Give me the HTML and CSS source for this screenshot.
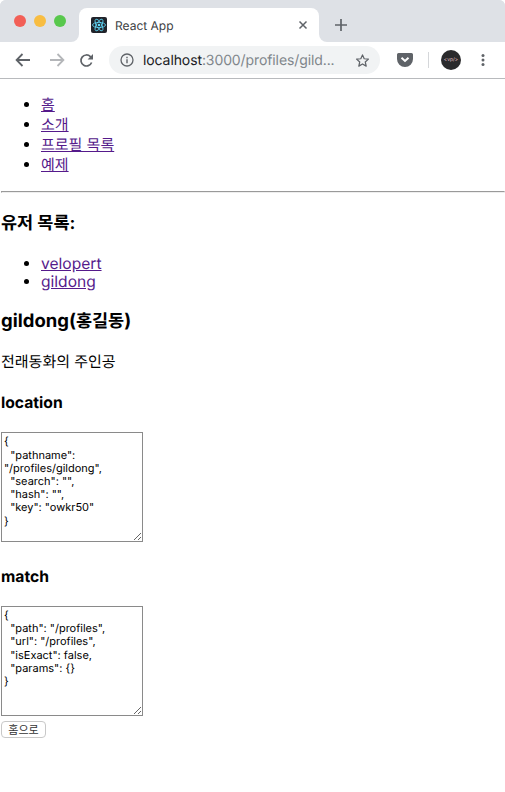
FILE: index.html
```html
<!DOCTYPE html>
<html lang="ko">
<head>
    <meta charset="UTF-8">
    <meta name="viewport" content="width=device-width, initial-scale=1.0">
    <title>React App</title>
    <link rel="stylesheet" href="styles.css">
</head>
<body>
    <!-- Browser window top -->
    <div class="tabstrip">
        <div class="lights">
            <span class="light red"></span>
            <span class="light yellow"></span>
            <span class="light green"></span>
        </div>
        <div class="tab">
            <svg class="favicon" width="16" height="16" viewBox="0 0 16 16">
                <rect width="16" height="16" rx="2" fill="#20232a"/>
                <g fill="none" stroke="#61dafb" stroke-width="0.8">
                    <ellipse cx="8" cy="8" rx="6.5" ry="2.6"/>
                    <ellipse cx="8" cy="8" rx="6.5" ry="2.6" transform="rotate(60 8 8)"/>
                    <ellipse cx="8" cy="8" rx="6.5" ry="2.6" transform="rotate(120 8 8)"/>
                </g>
                <circle cx="8" cy="8" r="1.3" fill="#61dafb"/>
            </svg>
            <span class="tab-title">React App</span>
            <svg class="tab-close" width="10" height="10" viewBox="0 0 10 10">
                <path d="M1.5 1.5l7 7M8.5 1.5l-7 7" stroke="#5f6368" stroke-width="1.5" fill="none"/>
            </svg>
        </div>
        <div class="strip-rest">
            <svg width="14" height="14" viewBox="0 0 14 14">
                <path d="M7 1v12M1 7h12" stroke="#5f6368" stroke-width="1.7" fill="none"/>
            </svg>
        </div>
    </div>
    <div class="toolbar">
        <svg class="tool back" width="16" height="14" viewBox="0 0 16 14">
            <path d="M15 7H2M7.500 1L1.600 7l5.900 6" stroke="#5f6368" stroke-width="1.800" fill="none"/>
        </svg>
        <svg class="tool forward" width="16" height="14" viewBox="0 0 16 14">
            <path d="M1 7h13M8.500 1l5.900 6-5.900 6" stroke="#b4b6b9" stroke-width="1.800" fill="none"/>
        </svg>
        <svg class="tool reload" width="15" height="15" viewBox="0 0 15 15">
            <path d="M12.600 9.500A5.500 5.500 0 1 1 11.400 3.600L13 5.200" stroke="#5f6368" stroke-width="1.700" fill="none"/>
            <path d="M14 1v5.400H8.600z" fill="#5f6368"/>
        </svg>
        <div class="omnibox">
            <svg class="info" width="14" height="14" viewBox="0 0 14 14">
                <circle cx="7" cy="7" r="6" stroke="#5f6368" stroke-width="1.300" fill="none"/>
                <path d="M7 6.200v4M7 3.700v1.500" stroke="#5f6368" stroke-width="1.400" fill="none"/>
            </svg>
            <span class="url"><span class="host">localhost</span>:3000/profiles/gild...</span>
            <svg class="star" width="15" height="15" viewBox="0 0 24 24">
                <path d="M12 3l2.700 6.200 6.800.6-5.100 4.500 1.500 6.700-5.900-3.500L6.100 21l1.500-6.700-5.100-4.500 6.800-.6z" stroke="#5f6368" stroke-width="2" stroke-linejoin="round" fill="none"/>
            </svg>
        </div>
        <svg class="pocket" width="16" height="14" viewBox="0 0 16 14">
            <path d="M1.500 0h13A1.500 1.500 0 0 1 16 1.500V6A8 8 0 0 1 0 6V1.500A1.500 1.500 0 0 1 1.500 0z" fill="#5f6368"/>
            <path d="M4.500 4.800L8 8l3.500-3.200" stroke="#fff" stroke-width="2" fill="none"/>
        </svg>
        <span class="toolbar-sep"></span>
        <div class="avatar">&lt;vp/&gt;</div>
        <svg class="menu" width="4" height="14" viewBox="0 0 4 14">
            <circle cx="2" cy="2.500" r="1.500" fill="#5f6368"/>
            <circle cx="2" cy="7" r="1.500" fill="#5f6368"/>
            <circle cx="2" cy="11.500" r="1.500" fill="#5f6368"/>
        </svg>
    </div>

    <!-- Page -->
    <div class="page">
        <ul class="nav">
            <li><a href="#">홈</a></li>
            <li><a href="#">소개</a></li>
            <li><a href="#">프로필 목록</a></li>
            <li><a href="#">예제</a></li>
        </ul>
        <hr>
        <h3 class="users-title"><span class="ko">유저 목록:</span></h3>
        <ul class="users">
            <li><a href="#">velopert</a></li>
            <li><a href="#">gildong</a></li>
        </ul>
        <h3 class="name">gildong(<span class="ko">홍길동</span>)</h3>
        <p class="bio">전래동화의 주인공</p>
        <h4>location</h4>
        <textarea readonly>{
  "pathname": "/profiles/gildong",
  "search": "",
  "hash": "",
  "key": "owkr50"
}</textarea>
        <h4 class="after-dump">match</h4>
        <textarea readonly>{
  "path": "/profiles",
  "url": "/profiles",
  "isExact": false,
  "params": {}
}</textarea>
        <button type="button">홈으로</button>
    </div>
</body>
</html>
```

FILE: styles.css
```css
html, body {
    margin: 0;
    padding: 0;
    background-color: #fff;
}
body {
    font-family: "Inter", "Noto Sans CJK KR", sans-serif;
    font-size: 16px;
    color: #000;
    text-rendering: geometricPrecision;
}
a {
    color: #551a8b;
}

/* tab strip */
.tabstrip {
    display: flex;
    height: 42px;
    background: linear-gradient(#dee1e6 34px, #fff 34px);
    border-radius: 6px 6px 0 0;
}
.lights {
    display: flex;
    align-items: center;
    gap: 8px;
    width: 79px;
    box-sizing: border-box;
    padding-left: 14px;
    background-color: #dee1e6;
    border-radius: 6px 0 8px 0;
}
.light {
    width: 12px;
    height: 12px;
    border-radius: 50%;
}
.red { background-color: #f25f57; }
.yellow { background-color: #f8bd42; }
.green { background-color: #58c84d; }
.tab {
    display: flex;
    align-items: center;
    width: 240px;
    box-sizing: border-box;
    margin-top: 8px;
    padding: 0 11px 0 12px;
    background-color: #fff;
    border-radius: 8px 8px 0 0;
}
.favicon {
    flex: none;
}
.tab-title {
    flex: 1;
    margin-left: 8px;
    font-size: 12px;
    color: #3c4043;
}
.strip-rest {
    flex: 1;
    display: flex;
    align-items: center;
    padding: 8px 0 0 15px;
    background-color: #dee1e6;
    border-radius: 0 6px 0 8px;
}

/* toolbar */
.toolbar {
    display: flex;
    align-items: center;
    height: 36px;
    border-bottom: 1px solid #b8babd;
    box-sizing: content-box;
}
.back { margin-left: 15px; }
.forward { margin-left: 18px; }
.reload { margin-left: 14px; }
.omnibox {
    display: flex;
    align-items: center;
    width: 271px;
    height: 28px;
    box-sizing: border-box;
    margin-left: 15px;
    padding: 0 10px 0 11px;
    background-color: #f1f3f4;
    border-radius: 14px;
}
.url {
    flex: 1;
    margin-left: 9px;
    font-size: 14px;
    letter-spacing: -0.1px;
    white-space: nowrap;
    color: #80868b;
}
.host {
    color: #202124;
}
.pocket { margin-left: 17px; }
.toolbar-sep {
    width: 1px;
    height: 16px;
    margin-left: 15px;
    background-color: #d5d7da;
}
.avatar {
    width: 20px;
    height: 20px;
    margin-left: 12px;
    border-radius: 50%;
    background-color: #2a2a2c;
    color: #e8c4c8;
    font-size: 5px;
    line-height: 20px;
    text-align: center;
}
.menu { margin-left: 20px; }

/* page content */
.page {
    padding-left: 1px;
}
.ko {
    font-size: 17.5px;
}
.nav {
    margin: 16px 0;
    font-size: 15px;
    line-height: 20px;
}
hr {
    margin: 16px 0 0;
}
h3 {
    margin: 18.72px 0;
    font-size: 18.72px;
    line-height: 22px;
}
.users-title {
    margin-bottom: 20.72px;
}
.users {
    margin: 16px 0;
    font-size: 15.6px;
    line-height: 18px;
}
.name {
    margin-bottom: 18.72px;
    font-size: 18.5px;
}
.bio {
    margin: 16px 0 21.28px;
    font-size: 15px;
    line-height: 20px;
}
h4 {
    margin: 20.28px 0 19.28px;
    font-size: 15.7px;
    line-height: 20px;
}
.after-dump {
    margin-top: 24.28px;
}
textarea {
    display: block;
    width: 142px;
    height: 110px;
    box-sizing: border-box;
    margin: 0;
    padding: 2px;
    border: 1px solid #8a8a8a;
    font-family: "Inter", "Liberation Sans", sans-serif;
    font-size: 11px;
    line-height: 13.2px;
    color: #000;
    background-color: #fff;
    text-rendering: geometricPrecision;
}
button {
    display: block;
    width: 45px;
    height: 17px;
    box-sizing: border-box;
    margin: 5px 0 0;
    padding: 0;
    border: 1px solid #c8c8c8;
    border-radius: 4px;
    background-color: #fff;
    font-family: "Noto Sans CJK KR", sans-serif;
    font-size: 11px;
    line-height: 13px;
    color: #333;
}
```
